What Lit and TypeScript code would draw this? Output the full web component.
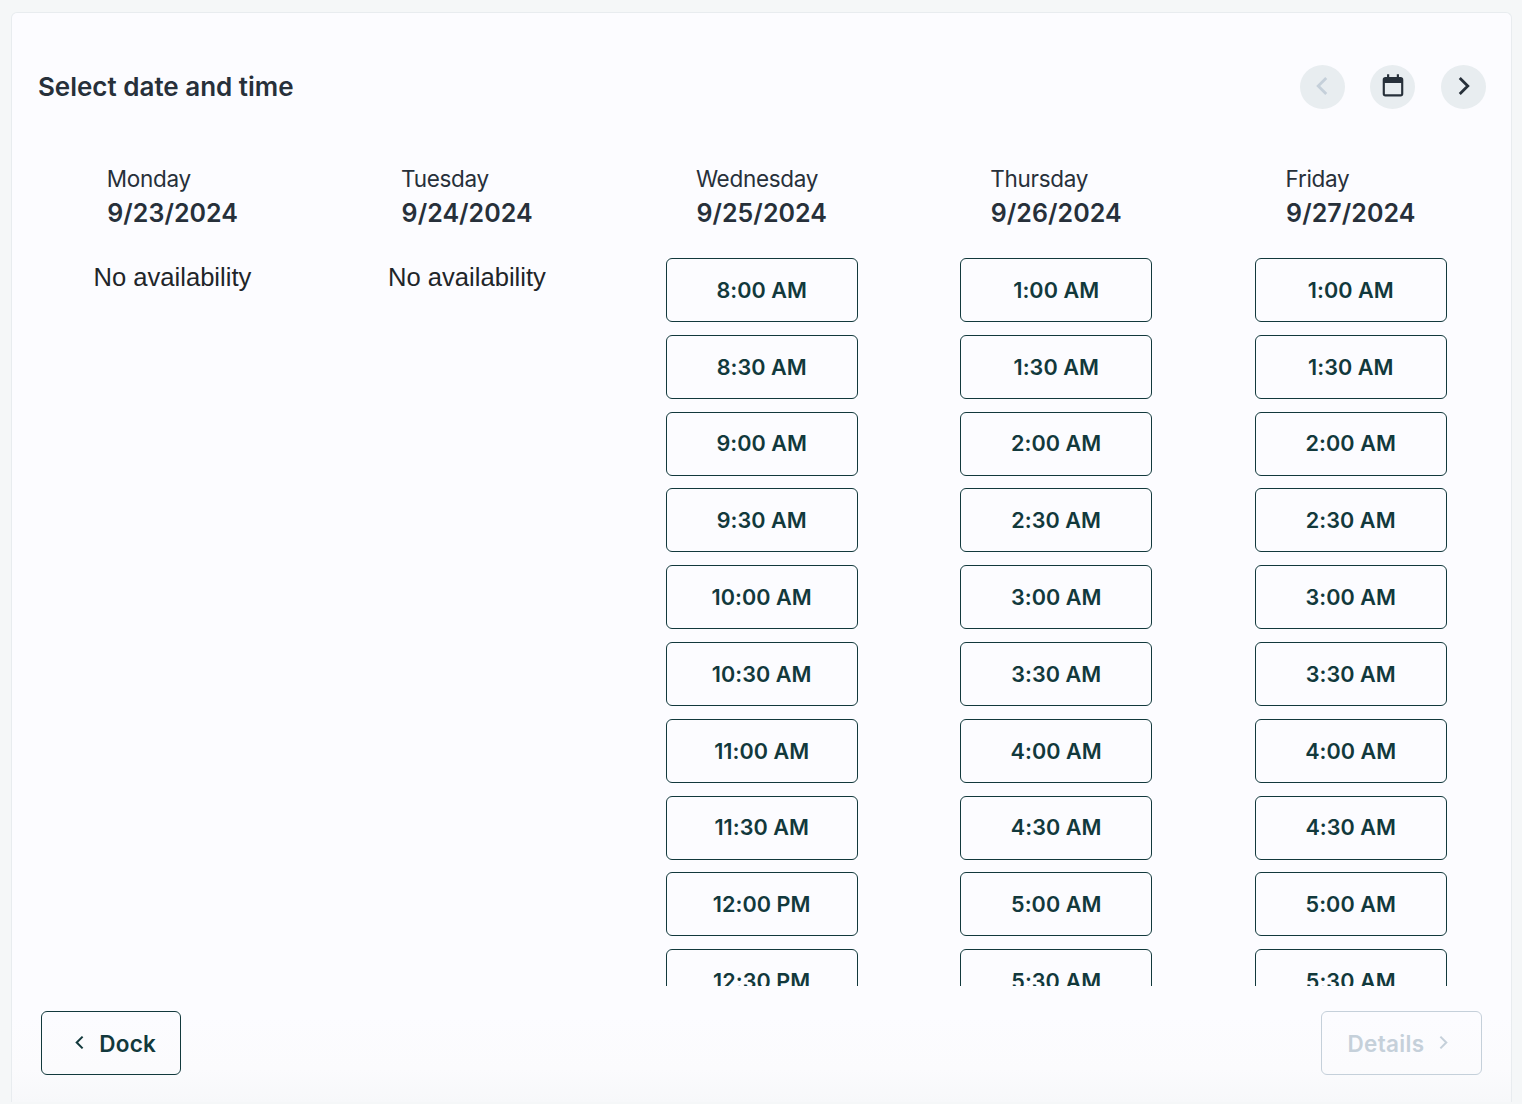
import { LitElement, html, css, svg } from "lit";
import { customElement } from "lit/decorators.js";

const am = (list: string[]) => list;
const afternoon = am(["1:00 AM","1:30 AM","2:00 AM","2:30 AM","3:00 AM","3:30 AM","4:00 AM","4:30 AM","5:00 AM","5:30 AM"]);
const days = [
  { name: "Monday", date: "9/23/2024", slots: [] as string[] },
  { name: "Tuesday", date: "9/24/2024", slots: [] as string[] },
  { name: "Wednesday", date: "9/25/2024", slots: ["8:00 AM","8:30 AM","9:00 AM","9:30 AM","10:00 AM","10:30 AM","11:00 AM","11:30 AM","12:00 PM","12:30 PM"] },
  { name: "Thursday", date: "9/26/2024", slots: afternoon },
  { name: "Friday", date: "9/27/2024", slots: afternoon },
];

const chevron = (dir: "l" | "r", size: number) => html`<svg width=${size} height=${size} viewBox="0 0 24 24" fill="none" stroke="currentColor" stroke-width="2.6" stroke-linecap="square" stroke-linejoin="miter">${svg`<path d=${dir === "l" ? "M15 5.5 8.5 12l6.5 6.5" : "M9 5.5 15.5 12 9 18.5"}></path>`}</svg>`;

@customElement("app-root")
export class AppRoot extends LitElement {
  static styles = css`
    :host { display: block; height: 1104px; background: #f5f7f8; font-family: Inter, "Liberation Sans", sans-serif; overflow: hidden; }
    .card { box-sizing: border-box; margin: 12px 10px 0 11px; height: 1090px; border: 1px solid #e8ecef; border-bottom: 0; border-radius: 6px 6px 0 0; background: linear-gradient(#fcfcff 0 92%, #fbfbfd 97%, #f7f8fa); padding: 0 13px 0 13.4px; display: flex; flex-direction: column; }
    .head { display: flex; align-items: center; justify-content: space-between; height: 44px; margin-top: 52px; padding: 0 12px 0 12.5px; flex: none; }
    h1 { margin: 0 0 1.5px; font-size: 26px; font-weight: 600; color: #27303a; }
    .nav { display: flex; gap: 25.6px; }
    .round { width: 45px; height: 44px; border: 0; padding: 0; border-radius: 50%; background: #e8edf0; color: #27303a; display: flex; align-items: center; justify-content: center; }
    .round svg { margin-bottom: 1.5px; }
    .round .cal { margin-bottom: 0; }
    .round.off { color: #c5d0da; }
    .grid { display: grid; grid-template-columns: repeat(5, 1fr); height: 845px; margin-top: 32px; overflow: hidden; flex: none; }
    .col { display: flex; flex-direction: column; align-items: center; }
    .dayhead { height: 117px; color: #27303a; flex: none; }
    .name { font-size: 22.5px; line-height: 30px; font-weight: 400; letter-spacing: -0.3px; margin: 23px 0 0 -0.5px; }
    .date { font-size: 25px; line-height: 39px; font-weight: 600; letter-spacing: 0.05px; }
    .none { font-family: "Liberation Sans", sans-serif; font-size: 25.6px; color: #212529; line-height: 32px; margin: 3px 0 0 -0.5px; }
    .slots { display: flex; flex-direction: column; gap: 12.8px; }
    .slot, .foot button { font-family: inherit; box-sizing: border-box; height: 64px; background: transparent; border: 1px solid #12393c; border-radius: 6px; color: #12393c; font-weight: 590; display: flex; align-items: center; justify-content: center; flex: none; }
    .slot { width: 192px; padding: 0 0 0.4px; font-size: 21.6px; letter-spacing: 0.05px; }
    .foot { display: flex; justify-content: space-between; padding: 0 16px; margin-top: 25px; flex: none; }
    .foot button { font-size: 22.5px; letter-spacing: 0.2px; }
    .foot button svg { margin-bottom: 1px; }
    .foot button.back { width: 140px; gap: 10.5px; padding: 0 0 0 3px; }
    .foot button.next { width: 161px; gap: 9.5px; padding: 0 2.5px 0 0; color: #c5d0da; border-color: #c5d0da; letter-spacing: 0.35px; }
  `;

  render() {
    return html`<div class="card">
      <div class="head">
        <h1>Select date and time</h1>
        <div class="nav">
          <button class="round off">${chevron("l", 26)}</button>
          <button class="round">
            <svg class="cal" width="26" height="26" viewBox="0 1.200 24 24" fill="currentColor"><path fill-rule="evenodd" d="M6.500 1.500h2V4h7V1.500h2V4H19a2.500 2.500 0 0 1 2.500 2.500v13A2.500 2.500 0 0 1 19 22H5a2.500 2.500 0 0 1-2.500-2.500v-13A2.500 2.500 0 0 1 5 4h1.500zM4.500 9.500v10c0 .3.200.5.500.5h14c.3 0 .5-.2.500-.5v-10z"></path></svg>
          </button>
          <button class="round">${chevron("r", 26)}</button>
        </div>
      </div>
      <div class="grid">
        ${days.map((d) => html`<div class="col">
          <div class="dayhead"><div class="name">${d.name}</div><div class="date">${d.date}</div></div>
          ${d.slots.length
            ? html`<div class="slots">${d.slots.map((s) => html`<button class="slot">${s}</button>`)}</div>`
            : html`<div class="none">No availability</div>`}
        </div>`)}
      </div>
      <div class="foot">
        <button class="back">${chevron("l", 19)}<span>Dock</span></button>
        <button class="next"><span>Details</span>${chevron("r", 19)}</button>
      </div>
    </div>`;
  }
}
